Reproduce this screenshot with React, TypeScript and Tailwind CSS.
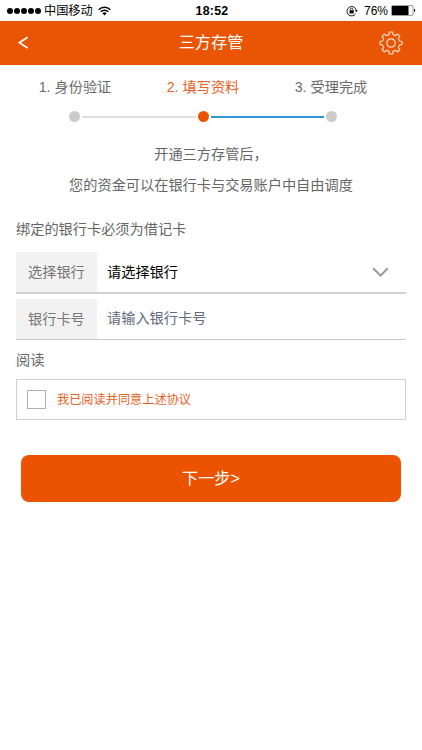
import { useState } from "react";

const steps = [
  { label: "1. 身份验证", active: false },
  { label: "2. 填写资料", active: true },
  { label: "3. 受理完成", active: false },
];

// Outline of a cog with eight teeth, centred on 0,0
const gearPath = () => {
  const point = (radius: number, deg: number) => {
    const a = ((deg - 90) * Math.PI) / 180;
    return `${(radius * Math.cos(a)).toFixed(2)} ${(radius * Math.sin(a)).toFixed(2)}`;
  };
  let d = "";
  for (let i = 0; i < 8; i++) {
    const t = i * 45;
    d += `${i === 0 ? "M" : "L"}${point(8.9, t - 12)}`;
    d += `L${point(11, t - 9)}`;
    d += `A11 11 0 0 1 ${point(11, t + 9)}`;
    d += `L${point(8.9, t + 12)}`;
    d += `Q${point(8.1, t + 22.5)} ${point(8.9, t + 33)}`;
  }
  return d + "Z";
};

const StatusBar = () => (
  <div className="relative flex h-[21px] items-center justify-between pr-[6px] pl-[7px] text-black">
    <div className="flex items-center">
      <div className="flex gap-[1px]">
        {[0, 1, 2, 3, 4].map((dot) => (
          <span key={dot} className="h-[6px] w-[6px] rounded-full bg-black" />
        ))}
      </div>
      <span className="ml-[3px] pt-[2px] text-[12.2px] leading-[21px]">中国移动</span>
      <svg className="ml-[5px]" width="13" height="10" viewBox="0 0 13 10" fill="none" stroke="#000" strokeWidth="1.5">
        <path d="M0.7 3.7a8.2 8.2 0 0 1 11.6 0" />
        <path d="M2.7 5.8a5.4 5.4 0 0 1 7.6 0" />
        <path d="M6.5 9.4 4.4 7.3a3 3 0 0 1 4.2 0Z" fill="#000" stroke="none" />
      </svg>
    </div>
    <span className="absolute top-0 left-[195.5px] text-[12.4px] leading-[22px] font-bold tracking-[0.25px]">
      18:52
    </span>
    <div className="flex items-center">
      <svg width="12" height="12" viewBox="0 0 12 12" fill="none" stroke="#000">
        <path d="M9.6 8.8A4.7 4.7 0 1 1 10.2 5" strokeWidth="0.9" />
        <path d="M8.7 5.2h3.1l-1.5 2z" fill="#000" stroke="none" />
        <path d="M4.3 5.4V4.5a1.3 1.3 0 0 1 2.6 0v0.9" strokeWidth="0.8" />
        <rect x="3.5" y="5.2" width="4.2" height="3.2" rx="0.3" fill="#000" stroke="none" />
      </svg>
      <span className="ml-[6px] text-[12px] leading-[22px]">76%</span>
      <svg className="ml-[3px]" width="25" height="11" viewBox="0 0 25 11">
        <rect x="0.5" y="0.5" width="21.5" height="10" rx="1" fill="none" stroke="#777" strokeWidth="0.7" />
        <rect x="1" y="1" width="16.5" height="9" rx="0.5" />
        <path d="M23 3.8c1.6 0.3 1.6 3.1 0 3.4z" />
      </svg>
    </div>
  </div>
);

const Header = () => (
  <header className="relative flex h-[44px] items-center justify-center bg-[#e95504] text-white">
    <button className="absolute top-[15px] left-[18px]" aria-label="返回">
      <svg width="11" height="13" viewBox="0 0 11 13" fill="none" stroke="#fff" strokeWidth="1.7">
        <path d="M9.6 1.2 1.4 6.7 9.6 12" />
      </svg>
    </button>
    <h1 className="pb-px text-[16.2px] leading-[43px]">三方存管</h1>
    <button className="absolute top-[10px] right-[19px]" aria-label="设置">
      <svg width="24" height="24" viewBox="-12 -12 24 24" fill="none" stroke="#ffdcc5" strokeWidth="1.2" strokeLinejoin="round">
        <path d={gearPath()} />
        <circle r="4.2" />
      </svg>
    </button>
  </header>
);

const Progress = () => (
  <div className="h-[65px]">
    <div className="flex pr-[27px] pl-[11px]">
      {steps.map((step) => (
        <div
          key={step.label}
          className={`w-[128px] shrink-0 text-center text-[14.2px] leading-[44px] ${
            step.active ? "text-[#e8611f]" : "text-[#6b6b6b]"
          }`}
        >
          {step.label}
        </div>
      ))}
    </div>
    <div className="mt-[2px] flex items-center pl-[69px]">
      <span className="h-[11px] w-[11px] rounded-full bg-[#cbcbcb]" />
      <span className="mx-[2px] h-[2px] w-[113.5px] bg-[#dedede]" />
      <span className="h-[11px] w-[11px] rounded-full bg-[#e95504]" />
      <span className="mx-[2px] h-[2px] w-[113.5px] bg-[#2f97d3]" />
      <span className="h-[11px] w-[11px] rounded-full bg-[#cbcbcb]" />
    </div>
  </div>
);

const App = () => {
  const [agreed, setAgreed] = useState(false);
  const [card, setCard] = useState("");

  return (
    <div className="h-[750px] w-[422px] overflow-hidden bg-white font-['Liberation_Sans','Noto_Sans_CJK_SC',sans-serif] text-[14.2px] text-[#666]">
      <StatusBar />
      <Header />
      <Progress />

      {/* Intro */}
      <div className="mt-[9px] text-center">
        <p className="leading-[30px]">开通三方存管后，</p>
        <p className="mt-px leading-[30px]">您的资金可以在银行卡与交易账户中自由调度</p>
      </div>

      <div className="pr-4 pl-4">
        <p className="mt-[19px] leading-[20px]">绑定的银行卡必须为借记卡</p>

        {/* Bank select */}
        <div className="mt-[13px] flex h-[42px] border-b-2 border-[#d0d0d0]">
          <span className="w-[81px] bg-[#f2f2f2] pl-3 leading-[40px] text-[#777]">选择银行</span>
          <span className="flex-1 pl-[10px] leading-[40px] text-black">请选择银行</span>
          <svg className="mt-[15px] mr-[17px]" width="17" height="11" viewBox="0 0 17 11" fill="none" stroke="#999" strokeWidth="2">
            <path d="M1.2 1.2 8.5 8.6 15.8 1.2" />
          </svg>
        </div>

        {/* Card number */}
        <div className="mt-[5px] flex h-[41px] border-b border-[#c8c8c8]">
          <span className="w-[81px] bg-[#f2f2f2] pl-3 leading-[40px] text-[#777]">银行卡号</span>
          <input
            className="h-[38px] flex-1 pl-[10px] outline-none placeholder:text-[#5f6b80]"
            placeholder="请输入银行卡号"
            value={card}
            onChange={(e) => setCard(e.target.value)}
          />
        </div>

        <p className="mt-[10px] leading-[20px]">阅读</p>

        {/* Agreement */}
        <label className="mt-[9px] flex h-[41px] items-center border border-[#cfcfcf] pl-[10px]">
          <input
            type="checkbox"
            className="h-[19px] w-[19px] appearance-none border border-[#b0b0b0] checked:bg-[#e95504]"
            checked={agreed}
            onChange={() => setAgreed(!agreed)}
          />
          <span className="ml-[11px] pt-[2px] text-[12.2px] text-[#e8611f]">我已阅读并同意上述协议</span>
        </label>
      </div>

      <button className="mt-[35px] ml-[21px] block h-[47px] w-[380px] rounded-lg bg-[#eb5300] text-[16.2px] text-white">
        下一步&gt;
      </button>
    </div>
  );
};

export default App;
